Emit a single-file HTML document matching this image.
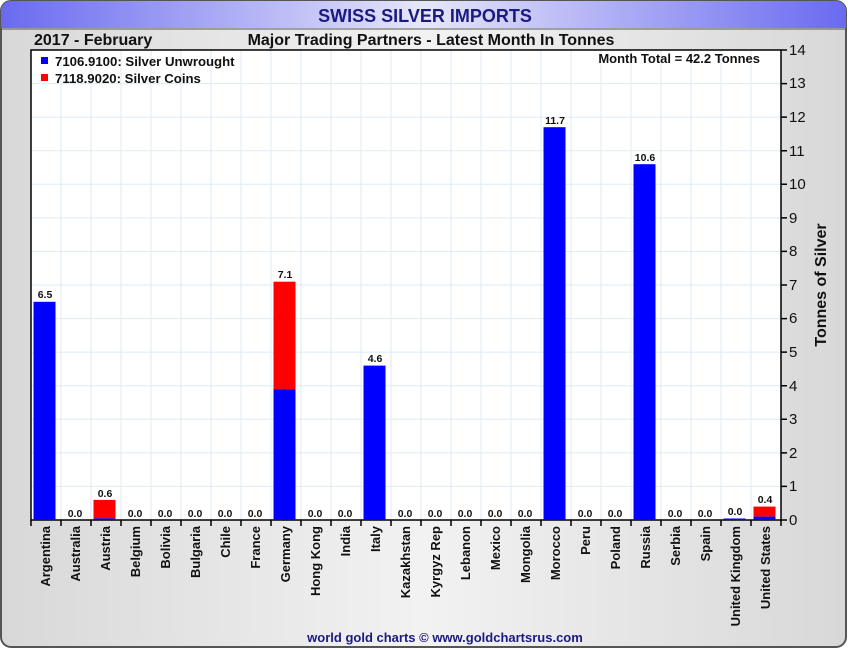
<!DOCTYPE html><html><head><style>body{margin:0;background:#fff}svg{display:block;font-family:"Liberation Sans",Arial,sans-serif}</style></head><body>
<svg width="850" height="650" viewBox="0 0 850 650">
<defs>
<linearGradient id="tb" x1="0" x2="1"><stop offset="0" stop-color="#6a6af0"/><stop offset="0.5" stop-color="#e6e6fa"/><stop offset="1" stop-color="#6a6af0"/></linearGradient>
<linearGradient id="bg" x1="0" x2="1"><stop offset="0" stop-color="#d8d8d8"/><stop offset="0.5" stop-color="#f2f2f2"/><stop offset="1" stop-color="#d8d8d8"/></linearGradient>
</defs>
<rect x="1" y="1" width="845" height="646" rx="10" fill="url(#bg)" stroke="#555" stroke-width="2"/>
<path d="M1 28 V11 A10 10 0 0 1 11 1 H836 A10 10 0 0 1 846 11 V28 Z" fill="url(#tb)"/>
<line x1="1" y1="29" x2="846" y2="29" stroke="#555" stroke-width="1"/>
<text x="425" y="22" text-anchor="middle" font-size="18" font-weight="bold" fill="#1a1a80">SWISS SILVER IMPORTS</text>
<text x="34" y="45" font-size="16" font-weight="bold" fill="#111">2017 - February</text>
<text x="431" y="45" text-anchor="middle" font-size="16" font-weight="bold" fill="#111">Major Trading Partners - Latest Month In Tonnes</text>
<rect x="31" y="50" width="750" height="470" fill="#fff"/>
<g stroke="#deebf5" stroke-width="1">
<path d="M61 50V520M91 50V520M121 50V520M151 50V520M181 50V520M211 50V520M241 50V520M271 50V520M301 50V520M331 50V520M361 50V520M391 50V520M421 50V520M451 50V520M481 50V520M511 50V520M541 50V520M571 50V520M601 50V520M631 50V520M661 50V520M691 50V520M721 50V520M751 50V520"/>
<path d="M31 486.4H781M31 452.9H781M31 419.3H781M31 385.7H781M31 352.1H781M31 318.6H781M31 285H781M31 251.4H781M31 217.9H781M31 184.3H781M31 150.7H781M31 117.1H781M31 83.6H781"/>
</g>
<rect x="31" y="50" width="750" height="470" fill="none" stroke="#000" stroke-width="1.5"/>
<rect x="41" y="57" width="7" height="7" fill="#00f"/><text x="55" y="66" font-size="13.2" font-weight="bold" fill="#111">7106.9100: Silver Unwrought</text>
<rect x="41" y="74" width="7" height="7" fill="#f00"/><text x="55" y="83" font-size="13.2" font-weight="bold" fill="#111">7118.9020: Silver Coins</text>
<text x="760" y="63" text-anchor="end" font-size="13" font-weight="bold" fill="#111">Month Total = 42.2 Tonnes</text>
<g fill="#00f">
<rect x="33.5" y="301.8" width="22" height="218.2"/>
<rect x="273.5" y="389.1" width="22" height="130.9"/>
<rect x="363.5" y="365.6" width="22" height="154.4"/>
<rect x="543.5" y="127.2" width="22" height="392.8"/>
<rect x="633.5" y="164.2" width="22" height="355.8"/>
<rect x="723.5" y="518.5" width="22" height="1.5"/>
</g>
<g fill="#f00">
<rect x="93.5" y="499.9" width="22" height="18.4"/>
<rect x="273.5" y="281.7" width="22" height="107.4"/>
<rect x="753.5" y="506.6" width="22" height="10"/>
</g>
<rect x="93.5" y="518.3" width="22" height="1.7" fill="#00f"/>
<rect x="753.5" y="516.6" width="22" height="3.4" fill="#00f"/>
<g font-size="10.5" font-weight="bold" fill="#111" text-anchor="middle">
<text x="45" y="298">6.5</text><text x="75" y="517">0.0</text><text x="105" y="497">0.6</text><text x="135" y="517">0.0</text><text x="165" y="517">0.0</text><text x="195" y="517">0.0</text><text x="225" y="517">0.0</text><text x="255" y="517">0.0</text><text x="285" y="278">7.1</text><text x="315" y="517">0.0</text><text x="345" y="517">0.0</text><text x="375" y="362">4.6</text><text x="405" y="517">0.0</text><text x="435" y="517">0.0</text><text x="465" y="517">0.0</text><text x="495" y="517">0.0</text><text x="525" y="517">0.0</text><text x="555" y="124">11.7</text><text x="585" y="517">0.0</text><text x="615" y="517">0.0</text><text x="645" y="161">10.6</text><text x="675" y="517">0.0</text><text x="705" y="517">0.0</text><text x="735" y="515">0.0</text><text x="765" y="503">0.4</text>
</g>
<g stroke="#000" stroke-width="1.5">
<path d="M31 520v6M61 520v6M91 520v6M121 520v6M151 520v6M181 520v6M211 520v6M241 520v6M271 520v6M301 520v6M331 520v6M361 520v6M391 520v6M421 520v6M451 520v6M481 520v6M511 520v6M541 520v6M571 520v6M601 520v6M631 520v6M661 520v6M691 520v6M721 520v6M751 520v6M781 520v6"/>
<path d="M781 520h6M781 486.4h6M781 452.9h6M781 419.3h6M781 385.7h6M781 352.1h6M781 318.6h6M781 285h6M781 251.4h6M781 217.9h6M781 184.3h6M781 150.7h6M781 117.1h6M781 83.6h6M781 50h6"/>
</g>
<g font-size="15" fill="#111">
<text x="789" y="525">0</text><text x="789" y="491">1</text><text x="789" y="458">2</text><text x="789" y="424">3</text><text x="789" y="391">4</text><text x="789" y="357">5</text><text x="789" y="323">6</text><text x="789" y="290">7</text><text x="789" y="256">8</text><text x="789" y="223">9</text><text x="789" y="189">10</text><text x="789" y="156">11</text><text x="789" y="122">12</text><text x="789" y="88">13</text><text x="789" y="55">14</text>
</g>
<text transform="translate(826,285) rotate(-90)" text-anchor="middle" font-size="16" font-weight="bold" fill="#111">Tonnes of Silver</text>
<g font-size="13" font-weight="bold" fill="#111" text-anchor="end">
<text transform="translate(50,526) rotate(-90)">Argentina</text>
<text transform="translate(80,526) rotate(-90)">Australia</text>
<text transform="translate(110,526) rotate(-90)">Austria</text>
<text transform="translate(140,526) rotate(-90)">Belgium</text>
<text transform="translate(170,526) rotate(-90)">Bolivia</text>
<text transform="translate(200,526) rotate(-90)">Bulgaria</text>
<text transform="translate(230,526) rotate(-90)">Chile</text>
<text transform="translate(260,526) rotate(-90)">France</text>
<text transform="translate(290,526) rotate(-90)">Germany</text>
<text transform="translate(320,526) rotate(-90)">Hong Kong</text>
<text transform="translate(350,526) rotate(-90)">India</text>
<text transform="translate(380,526) rotate(-90)">Italy</text>
<text transform="translate(410,526) rotate(-90)">Kazakhstan</text>
<text transform="translate(440,526) rotate(-90)">Kyrgyz Rep</text>
<text transform="translate(470,526) rotate(-90)">Lebanon</text>
<text transform="translate(500,526) rotate(-90)">Mexico</text>
<text transform="translate(530,526) rotate(-90)">Mongolia</text>
<text transform="translate(560,526) rotate(-90)">Morocco</text>
<text transform="translate(590,526) rotate(-90)">Peru</text>
<text transform="translate(620,526) rotate(-90)">Poland</text>
<text transform="translate(650,526) rotate(-90)">Russia</text>
<text transform="translate(680,526) rotate(-90)">Serbia</text>
<text transform="translate(710,526) rotate(-90)">Spain</text>
<text transform="translate(740,526) rotate(-90)">United Kingdom</text>
<text transform="translate(770,526) rotate(-90)">United States</text>
</g>
<text x="445" y="642" text-anchor="middle" font-size="13" font-weight="bold" fill="#1a1a80">world gold charts © www.goldchartsrus.com</text>
</svg>
</body></html>
